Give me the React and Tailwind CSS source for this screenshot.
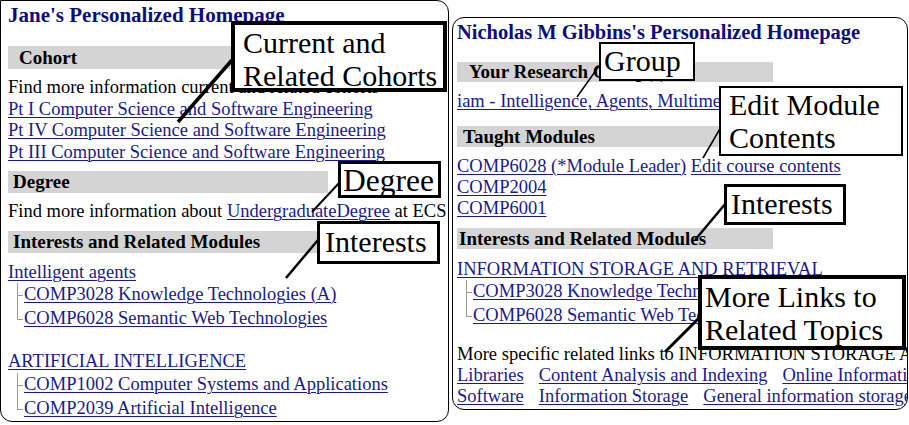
import React from "react";

const link = "text-[#1a1a8a] underline decoration-1 underline-offset-2";

const Bar = ({ children, className = "" }) => (
  <div className={`bg-[#d4d4d4] font-bold text-[19px] whitespace-nowrap ${className}`}>
    {children}
  </div>
);

const TreeItem = ({ children, last }) => (
  <div className="relative flex items-center h-[24px] pl-[16px] whitespace-nowrap">
    <span
      className={`absolute left-[9px] top-0 w-px bg-[#999] ${last ? "h-[12px]" : "h-full"}`}
    />
    <span className="absolute left-[9px] top-[12px] w-[6px] h-px bg-[#999]" />
    <a className={link}>{children}</a>
  </div>
);

const Callout = ({ className, children }) => (
  <div
    className={`absolute bg-white border-black text-black leading-[33px] text-[30px] whitespace-nowrap ${className}`}
  >
    {children}
  </div>
);

export default function App() {
  return (
    <div className="relative w-[909px] h-[425px] bg-white overflow-hidden font-['Liberation_Serif'] text-black text-[18.5px]">
      <div className="flex items-start">
        {/* left page */}
        <div className="w-[449px] h-[422px] border border-black rounded-tr-[12px] rounded-b-[12px] px-[7px] overflow-hidden">
          <div className="h-[30px] leading-[28px] text-[21px] font-bold text-[#0d0d80] whitespace-nowrap">
            Jane's Personalized Homepage
          </div>
          <Bar className="mt-[15px] h-[23px] leading-[23px] w-[320px] pl-[11px]">Cohort</Bar>
          <div className="mt-[8px] leading-[21.5px] whitespace-nowrap">
            <div>Find more information current and related cohorts</div>
            <div><a className={link}>Pt I Computer Science and Software Engineering</a></div>
            <div><a className={link}>Pt IV Computer Science and Software Engineering</a></div>
            <div><a className={link}>Pt III Computer Science and Software Engineering</a></div>
          </div>
          <Bar className="mt-[8px] h-[22px] leading-[22px] w-[320px] pl-[5px]">Degree</Bar>
          <div className="mt-[8px] leading-[21px] whitespace-nowrap">
            Find more information about <a className={link}>UndergraduateDegree</a> at ECS
          </div>
          <Bar className="mt-[9px] h-[22px] leading-[22px] w-[320px] pl-[5px]">
            Interests and Related Modules
          </Bar>
          <div className="mt-[8px] leading-[22px]">
            <a className={link}>Intelligent agents</a>
          </div>
          <TreeItem>COMP3028 Knowledge Technologies (A)</TreeItem>
          <TreeItem last>COMP6028 Semantic Web Technologies</TreeItem>
          <div className="mt-[18px] leading-[24px]">
            <a className={link}>ARTIFICIAL INTELLIGENCE</a>
          </div>
          <TreeItem>COMP1002 Computer Systems and Applications</TreeItem>
          <TreeItem last>COMP2039 Artificial Intelligence</TreeItem>
        </div>

        {/* right page */}
        <div className="ml-[3px] mt-[17px] w-[456px] h-[393px] border border-black rounded-[12px] px-[4px] overflow-hidden">
          <div className="h-[28px] leading-[28px] text-[20.5px] font-bold text-[#0d0d80] whitespace-nowrap">
            Nicholas M Gibbins's Personalized Homepage
          </div>
          <Bar className="mt-[16px] h-[20px] leading-[20px] w-[316px] pl-[12px]">
            Your Research Group(s)
          </Bar>
          <div className="mt-[9px] leading-[21px] whitespace-nowrap">
            <a className={link}>iam - Intelligence, Agents, Multimedia</a>
          </div>
          <Bar className="mt-[14px] h-[21px] leading-[21px] w-[316px] pl-[6px]">
            Taught Modules
          </Bar>
          <div className="mt-[9px] leading-[21px] whitespace-nowrap">
            <div>
              <a className={link}>COMP6028 (*Module Leader)</a>{" "}
              <a className={link}>Edit course contents</a>
            </div>
            <div><a className={link}>COMP2004</a></div>
            <div><a className={link}>COMP6001</a></div>
          </div>
          <Bar className="mt-[9px] h-[21px] leading-[21px] w-[316px] pl-[2px]">
            Interests and Related Modules
          </Bar>
          <div className="mt-[9px] leading-[22px] whitespace-nowrap">
            <a className={link}>INFORMATION STORAGE AND RETRIEVAL</a>
          </div>
          <TreeItem>COMP3028 Knowledge Technologies (A)</TreeItem>
          <TreeItem last>COMP6028 Semantic Web Technologies</TreeItem>
          <div className="mt-[16px] leading-[21px] whitespace-nowrap">
            More specific related links to INFORMATION STORAGE AND RETRIEVAL
          </div>
          <div className="leading-[21px] whitespace-nowrap flex gap-[15px]">
            <a className={link}>Libraries</a>
            <a className={link}>Content Analysis and Indexing</a>
            <a className={link}>Online Information Services</a>
          </div>
          <div className="leading-[21px] whitespace-nowrap flex gap-[15px]">
            <a className={link}>Software</a>
            <a className={link}>Information Storage</a>
            <a className={link}>General information storage</a>
          </div>
        </div>
      </div>

      {/* leader lines */}
      <svg className="absolute inset-0 pointer-events-none" width="909" height="425">
        <line x1="232" y1="60" x2="178" y2="122" stroke="black" strokeWidth="3.5" />
        <line x1="340" y1="182" x2="312" y2="212" stroke="black" strokeWidth="2" />
        <line x1="318" y1="240" x2="286" y2="278" stroke="black" strokeWidth="2.5" />
        <line x1="599" y1="66" x2="577" y2="97" stroke="black" strokeWidth="1.5" />
        <line x1="721" y1="127" x2="703" y2="158" stroke="black" strokeWidth="1.5" />
        <line x1="726" y1="203" x2="695" y2="240" stroke="black" strokeWidth="2.5" />
        <line x1="700" y1="317" x2="665" y2="352" stroke="black" strokeWidth="3" />
      </svg>

      {/* callouts */}
      <Callout className="left-[231px] top-[21px] w-[216px] h-[71px] border-[4px] pt-[1px] px-[8px]">
        Current and
        <br />
        Related Cohorts
      </Callout>
      <Callout className="left-[338px] top-[161px] w-[103px] h-[37px] border-[3px] leading-[30px] text-[31.5px] px-[2px]">
        Degree
      </Callout>
      <Callout className="left-[317px] top-[221px] w-[123px] h-[43px] border-[3px] leading-[36px] px-[5px]">
        Interests
      </Callout>
      <Callout className="left-[599px] top-[42px] w-[96px] h-[39px] border-[2px] leading-[34px] px-[3px]">
        Group
      </Callout>
      <Callout className="left-[719px] top-[86px] w-[184px] h-[70px] border-[2px] px-[8px]">
        Edit Module
        <br />
        Contents
      </Callout>
      <Callout className="left-[724px] top-[184px] w-[122px] h-[41px] border-[3px] leading-[34px] px-[4px]">
        Interests
      </Callout>
      <Callout className="left-[698px] top-[275px] w-[208px] h-[75px] border-[4px] pt-[1px] px-[3px]">
        More Links to
        <br />
        Related Topics
      </Callout>
    </div>
  );
}
